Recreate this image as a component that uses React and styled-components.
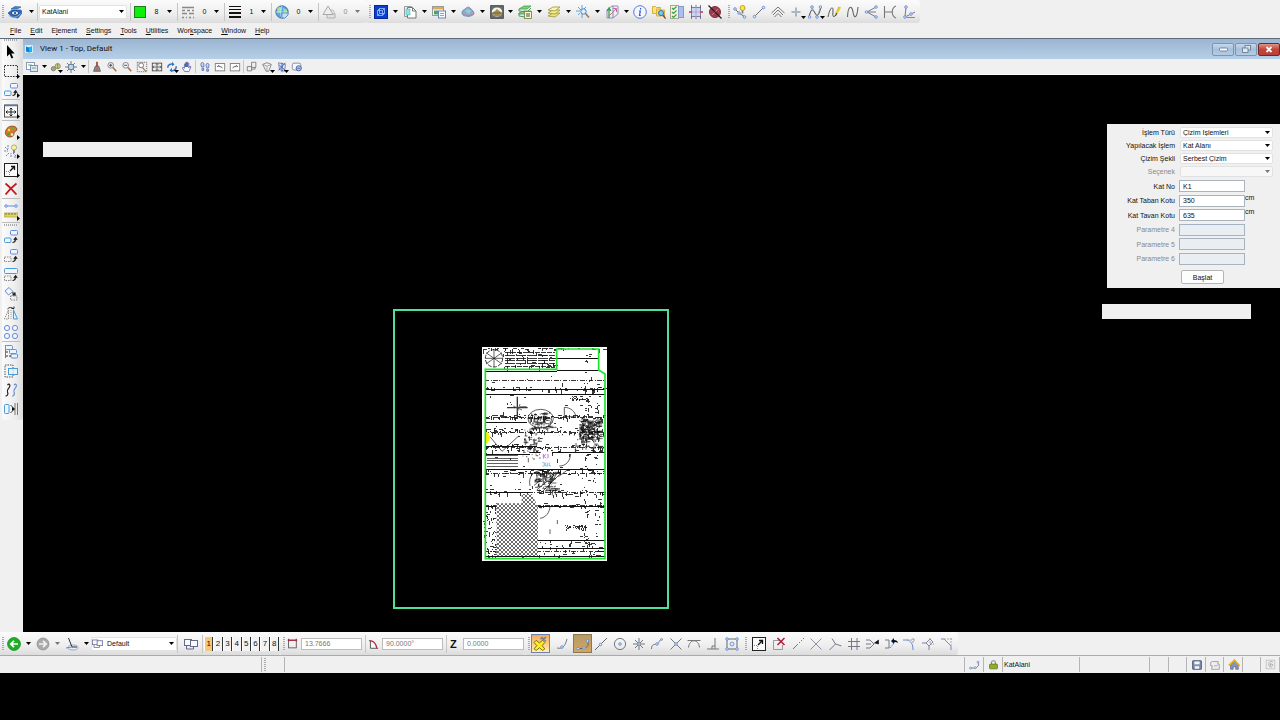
import React from "react";
import styled, { createGlobalStyle, css } from "styled-components";

/* ICONS */

const blue = "#6a8ad4";
const ink = "#6a6a6a";

const node = (x, y, r = 1.3) => (
  <circle key={`${x}-${y}`} cx={x} cy={y} r={r} fill="#dbe8ff" stroke={blue} strokeWidth="0.9" />
);

const dashedBox = (x, y, w, h, c = "#888") => (
  <rect x={x} y={y} width={w} height={h} stroke={c} strokeDasharray="1.5 1" />
);

const curvedArrow = (
  <path d="M8.5 12.5c3 0 3-2 3-4M9.8 9.8l1.8-2 1.6 2" stroke="#222" strokeWidth="1.2" />
);

const icons = {
  level: (
    <>
      <path d="M0 8l4-3h9l1 3-4 5-6-1z" fill="#2c6cbc" stroke="#1c4a8c" strokeWidth="0.6" />
      <ellipse cx="7" cy="8" rx="3.6" ry="2.2" fill="#eef5ff" stroke="#173d7a" />
      <circle cx="7" cy="8" r="1.2" fill="#2463b4" />
      <path d="M3 4l4-2.5 6 .5-4 2z" fill="#4b8cd6" stroke="#1d4f92" strokeWidth="0.6" />
      <path d="M0.5 10.5c4 3 9 2 12-2" stroke="#8db8ea" />
    </>
  ),
  lineStyle: (
    <path d="M1 2.5h12M1 5.5h3M6 5.5h3M11 5.5h2M1 8.5h5M8 8.5h5M1 12.5h2M5 12.5h1M8 12.5h2M12 12.5h1" stroke="#888" strokeWidth="1.4" />
  ),
  weight: (
    <>
      <path d="M1 1.5h12M1 4.5h12" stroke="#111" />
      <path d="M1 8h12M1 12h12" stroke="#111" strokeWidth="2" />
    </>
  ),
  globe: (
    <>
      <circle cx="7" cy="7" r="6.2" fill="#52a9e8" stroke="#3d5d86" strokeWidth="0.8" />
      <path d="M2 4c2-3 5-2 5 0S4 7 3 9zM8 3l4 2v3l-3 1z" fill="#a9dc9c" />
      <path d="M7 1c-2 4-2 8 0 12M1 7h12" stroke="#c7e6fb" strokeWidth="0.8" />
      <path d="M7 8h6v2l-3 3H7z" fill="#bfe2f8" stroke="#4778b8" strokeWidth="0.7" />
    </>
  ),
  transparency: (
    <>
      <path d="M5 9h8v4H5z" fill="#e2e2e2" stroke="#b0b0b0" />
      <path d="M6 1l5 8.5H1z" stroke="#a8a8a8" fill="#eee" />
      <path d="M9 5h2l2 4" stroke="#b8b8b8" />
    </>
  ),
  cube: (
    <>
      <rect x="0.5" y="0.5" width="13" height="13" fill="#0a3fd0" stroke="#08289a" />
      <path d="M3.5 5.5h5v5h-5zM5.5 3.5h5v5h-5zM3.5 5.5l2-2M8.5 5.5l2-2M8.5 10.5l2-2M3.5 10.5l2-2" stroke="#9fc4ff" strokeWidth="0.8" />
    </>
  ),
  page: (
    <>
      <path d="M1.5 1.5h7v10h-7z" fill="#eee" stroke="#999" />
      <path d="M4.5 2.5h5l3.5 3.5v7H4.5z" fill="#fff" stroke="#777" />
      <path d="M9.5 2.5V6H13" stroke="#777" />
      <path d="M3 4h4v6H3z" fill="#8fe3e0" stroke="#4aa" strokeWidth="0.5" />
    </>
  ),
  reference: (
    <>
      <rect x="0.5" y="1.5" width="11" height="9" fill="#fff" stroke="#999" />
      <rect x="1" y="2" width="10" height="2.5" fill="#e5a85a" />
      <rect x="2" y="5.5" width="4" height="4" fill="#45a86a" />
      <rect x="6.5" y="6" width="7" height="7" fill="#f7fbff" stroke="#6a88b5" />
      <path d="M8 8.5h4M8 10.5h4" stroke="#54c3d8" />
    </>
  ),
  cloud: (
    <>
      <path d="M1 8c0-3 2-3 3-4s3-3 5-1 4 3 4 6c-2 2-5 3-8 2-2 0-4-1-4-3z" fill="#93a9cc" stroke="#6a7ea2" strokeWidth="0.8" />
      <path d="M4 6l3-2 3 2-2 3z" fill="#8bd3cf" />
      <path d="M2 9.5c3 1.5 8 1.5 11-1" stroke="#c87f9f" />
    </>
  ),
  raster: (
    <>
      <rect x="0.7" y="0.7" width="12.6" height="12.6" fill="#68716f" stroke="#444" />
      <ellipse cx="7" cy="7" rx="5.2" ry="4.6" fill="#f3f7ef" />
      <path d="M2 8l3-2 2-2 5 4-2 3H4z" fill="#a98a4a" />
      <path d="M2 8h10" stroke="#5f7048" />
    </>
  ),
  modelList: (
    <>
      <path d="M1 4l5-3h7l-4 3zM1 8l5-2h7l-4 3H1z" fill="#7bd56f" stroke="#4a9b55" strokeWidth="0.8" />
      <path d="M1 4v2l8 1 4-4M1 8v3l6 1" stroke="#4a9b55" />
      <rect x="6.5" y="6.5" width="7" height="7" fill="#fff8c4" stroke="#707a3a" strokeWidth="0.8" />
      <path d="M8 9h4M8 11h4" stroke="#357" />
    </>
  ),
  layers: (
    <>
      <path d="M1 11l5-3h7l-5 4z" fill="#eee36c" stroke="#99943b" strokeWidth="0.8" />
      <path d="M1 8l5-3h7l-5 4z" fill="#f5ee93" stroke="#99943b" strokeWidth="0.8" />
      <path d="M1 5l5-3h7L8 6z" fill="#fbf6ae" stroke="#99943b" strokeWidth="0.8" />
    </>
  ),
  sparkleZoom: (
    <>
      <path d="M6 0v4M0 6h4M2 2l3 3M10 2L8 4M2 10l2-2M6 9v4" stroke="#5ba5dc" />
      <circle cx="7.5" cy="6.5" r="2.7" fill="#d9f1ff" stroke="#4883c2" />
      <path d="M9.5 8.5l3.5 4" stroke="#b2744e" strokeWidth="1.7" />
    </>
  ),
  acs: (
    <>
      <path d="M2 5l5-4h6v8l-5 4H2z" stroke="#9a8ac0" />
      <path d="M4 13V4M2 6l2-3 2 3" stroke="#3d9a4c" strokeWidth="1.3" />
      <path d="M4 11l7-7M8 3.5h3.5V7" stroke="#c76d8e" />
      <path d="M8 1v12" stroke="#7c8cc2" />
    </>
  ),
  info: (
    <>
      <circle cx="7" cy="7" r="6.3" fill="#f3f7ff" stroke="#5a78dc" />
      <path d="M7.6 3v1.4M6 6h1.3l-.8 4.5h1.3" stroke="#3558cf" strokeWidth="1.2" />
    </>
  ),
  folders: (
    <>
      <path d="M0.5 1.5h3l1 1h4v6h-8z" fill="#ffe479" stroke="#d4b040" />
      <path d="M4.5 4h3l1 1h4v6h-8z" fill="#ffd84d" stroke="#d4b040" />
      <circle cx="9" cy="8" r="2.5" fill="#73cdf0" stroke="#2f6eb0" />
      <path d="M11 10l2.5 3.5" stroke="#8d4f2e" strokeWidth="1.5" />
    </>
  ),
  checks: (
    <>
      <rect x="0.5" y="0.5" width="8" height="13" fill="#f3f4d8" stroke="#a9a98b" />
      <rect x="8.5" y="1.5" width="5" height="11" fill="#a9bfec" stroke="#8798c8" />
      <path d="M2 3l1.5 1.5 3-3M2 7l1.5 1.5 3-3M2 11l1.5 1.5 3-3" stroke="#3ca04a" strokeWidth="1.2" />
    </>
  ),
  gridLock: (
    <>
      <rect x="2.5" y="2.5" width="9" height="9" fill="#cfd3ef" stroke="#7c7ca0" />
      <path d="M7 2v10M2 7h10" stroke="#a5abd6" />
      <path d="M0 7h3M11 7h3" stroke="#c0344e" strokeWidth="1.3" />
      <path d="M7 0v2M7 12v2M2.5 0v3M2.5 11v3M11.5 0v3M11.5 11v3" stroke="#66668a" strokeWidth="0.9" />
    </>
  ),
  noMark: (
    <>
      <circle cx="7" cy="7" r="5.5" fill="#a63a4d" stroke="#7e2e3e" />
      <path d="M4 4l6 6M10 4l-6 6" stroke="#d08090" />
      <path d="M0.5 0.5l13 13" stroke="#222" strokeWidth="1.2" />
    </>
  ),
  smartLine: (
    <>
      <path d="M2 4l4 4 6 4" stroke={ink} />
      {node(2, 4)}
      {node(6, 8)}
      {node(11.5, 12)}
      <circle cx="9.5" cy="3" r="2.5" fill="#ffe83c" stroke="#a99314" strokeWidth="0.8" />
      <path d="M9.5 5.5v3" stroke="#777" strokeWidth="1.6" />
    </>
  ),
  line: (
    <>
      <path d="M2.5 11.5l9-9" stroke={ink} />
      {node(2.5, 11.5)}
      {node(11.5, 2.5)}
    </>
  ),
  multiLine: <path d="M0.5 8L7 2l6.500 6M2 10l5-5 5 5M3.500 12L7 8.500l3.500 3.500" stroke="#666" strokeWidth="0.9" />,
  point: (
    <>
      <path d="M7 2.500v9M2.500 7h9" stroke="#778" />
      <circle cx="7" cy="7" r="1.2" fill="#9cb8ee" />
    </>
  ),
  bspline: (
    <>
      <path d="M1 12L4 2l5 10 3.5-10" stroke="#9aa3c8" strokeWidth="0.8" />
      <path d="M1 12C3 3 5 4 7 8s4 3 6-6" stroke="#555" />
      {node(1.5, 12)}
      {node(4, 2)}
      {node(9, 12)}
      {node(12.5, 2)}
    </>
  ),
  freehand: (
    <>
      <path d="M1 12C3 2 6 1 6 5s-1 8 2 6 2-6 4-9" stroke="#555" />
      <path d="M9 9l4-7" stroke="#e7cb2e" strokeWidth="2.4" />
      <path d="M8.5 11l1-3" stroke="#444" />
    </>
  ),
  curve: <path d="M1.500 12C2 0 6 0 7 7s4 7 5-5" stroke="#666" strokeWidth="1.1" />,
  bisector: (
    <>
      <path d="M12 2L3 7l9 5M3 7h9" stroke="#778" />
      {node(12, 2)}
      {node(2.5, 7)}
      {node(12, 12)}
    </>
  ),
  minDistance: <path d="M1.500 1v12M2 7h7M13 1c-5 2-5 10 0 12" stroke="#777" strokeWidth="1.1" />,
  angleLine: (
    <>
      <path d="M4 2L3 12l10-5" stroke="#778" />
      {node(4, 2)}
      {node(3, 12)}
      {node(9, 9)}
      <path d="M5 12.5h8" stroke={blue} />
    </>
  ),
  viewAttr: (
    <>
      <rect x="1.5" y="2.5" width="8" height="7" fill="#fff" stroke="#8d9ab5" />
      <rect x="5.5" y="5.5" width="7" height="6" fill="#dce9f8" stroke="#7490c0" />
      <path d="M7 8h4M3 5h4" stroke="#68aa75" />
    </>
  ),
  display: (
    <>
      <circle cx="4" cy="9" r="2.5" fill="#a8a879" stroke="#777" />
      <circle cx="9" cy="6" r="3" fill="#d4d18d" stroke="#87845a" />
      <path d="M9 3v6" stroke="#4f8750" />
    </>
  ),
  sun: (
    <>
      <path d="M7 1v12M1 7h12M3 3l8 8M11 3l-8 8" stroke="#778" />
      <circle cx="7" cy="7" r="2.8" fill="#b7dbf0" stroke="#5d7c97" />
    </>
  ),
  brush: (
    <>
      <path d="M7 1v6" stroke="#a3422f" strokeWidth="2" />
      <path d="M5 6h4l2 6H3z" fill="#8c93a4" stroke="#444" strokeWidth="0.8" />
      <path d="M6 8v4M8 8v4" stroke="#c55a44" />
    </>
  ),
  zoomIn: (
    <>
      <circle cx="5.5" cy="5" r="3.3" fill="#f3f8ff" stroke="#778" />
      <path d="M5.5 3.2v3.600M3.7 5h3.600" stroke="#333" />
      <path d="M8 7.5l4 4.5" stroke="#a96b45" strokeWidth="1.7" />
    </>
  ),
  zoomOut: (
    <>
      <circle cx="5.5" cy="5" r="3.3" fill="#f3f8ff" stroke="#778" />
      <path d="M3.7 5h3.6" stroke="#333" />
      <path d="M8 7.5l4 4.5" stroke="#a96b45" strokeWidth="1.7" />
    </>
  ),
  windowArea: (
    <>
      {dashedBox(1.5, 1.5, 11, 11, "#666")}
      <circle cx="6" cy="5" r="2.8" fill="#fff" stroke="#667" />
      <path d="M7.5 7.5l4 5" stroke="#a98445" strokeWidth="1.5" />
    </>
  ),
  fit: (
    <>
      <rect x="1.5" y="2.5" width="11" height="9" stroke="#444" />
      <path d="M7 3v8M2 7h10M5.5 4.5L7 3l1.5 1.5M5.5 9.5L7 11l1.5-1.5M3.5 5.5L2 7l1.5 1.5M10.5 5.5L12 7l-1.5 1.5" stroke="#444" strokeWidth="0.9" />
    </>
  ),
  rotate: (
    <>
      <path d="M2 8c0-4 4-5 6-4M12 6c0 4-3 6-6 5" stroke="#3477c5" strokeWidth="1.8" />
      <path d="M7 1l3 3-3 2zM7 13l-3-2 3-3z" fill="#3477c5" />
    </>
  ),
  hand: (
    <path d="M4 12L1.500 8l1-.7L4 8.500V3.500h1.200V7V2h1.300v5V1.500h1.300V7V2.500h1.300V8l1.400-2 1 .7-1.500 4-1 1.800z" fill="#fff" stroke="#4a59a8" strokeWidth="0.9" />
  ),
  walk: (
    <path d="M3 2c3-1 3 2 2.500 5H3C2 5 2 3 3 2zM3.500 8.500h2V11h-2zM9 3c3-1 3 2 2 5H9C8 6 8 4 9 3zM9 9.500h2V12H9z" fill="#c3d5f4" stroke="#4762ae" strokeWidth="0.9" />
  ),
  viewPrev: (
    <>
      <rect x="1.5" y="3" width="11" height="8.5" fill="#fff" stroke="#777" />
      <path d="M3.500 7l2-2v1.500c2 0 4 0 4 2" stroke="#555" />
    </>
  ),
  viewNext: (
    <>
      <rect x="1.5" y="3" width="11" height="8.5" fill="#fff" stroke="#777" />
      <path d="M10.500 7l-2-2v1.500c-2 0-4 0-4 2" stroke="#555" />
    </>
  ),
  copyView: (
    <path d="M6.500 1.500h5v6h-5zM1.500 6.500h5v5h-5zM6.500 9.500h4v-2" stroke="#777" />
  ),
  clip: (
    <>
      <path d="M2 4l5-2 5 2-3 8H6z" fill="#f4f4f4" stroke="#777" />
      <path d="M2 4l5 2 5-2M7 6v6" stroke="#999" />
    </>
  ),
  clipMask: (
    <>
      <path d="M3 2l8 2-1 8-6-2z" fill="#e2edff" stroke="#6c7ab0" />
      <path d="M3 11l8-9M7 2v11M4 5l7 6" stroke="#33519c" />
    </>
  ),
  clipOff: (
    <>
      <rect x="1.5" y="2.5" width="10" height="8" rx="2" fill="#f6f8ff" stroke="#767fa6" />
      <circle cx="9" cy="8.5" r="3" fill="#b9cdf5" stroke="#334f9a" />
      <path d="M7.5 8.5h3" stroke="#334f9a" />
    </>
  ),
  pointer: <path d="M3 0v11.500l2.600-2.500 1.900 4.500 1.800-.8-2-4.200h3.400z" fill="#000" />,
  fence: <rect x="0.5" y="1.5" width="13" height="11" stroke="#222" strokeDasharray="1.5 1.2" />,
  copy: (
    <>
      <rect x="6.5" y="0.5" width="7" height="4.5" rx="1" fill="#eef6ff" stroke={blue} />
      <rect x="0.5" y="8" width="6.5" height="4.5" rx="1" fill="#eef6ff" stroke="#4a9bd6" />
      {curvedArrow}
    </>
  ),
  move: (
    <>
      <rect x="6.5" y="0.5" width="7" height="4.5" rx="1" fill="#eef6ff" stroke={blue} />
      {dashedBox(0.5, 8, 6.5, 4.5)}
      {curvedArrow}
    </>
  ),
  scale: (
    <>
      <rect x="0.5" y="0.5" width="13" height="5" rx="1" fill="#eef6ff" stroke="#4a9bd6" />
      {dashedBox(0.5, 8, 6.5, 4.5)}
      {curvedArrow}
    </>
  ),
  turn: (
    <>
      <path d="M5 0.500l4 4L4.500 8 1 4z" fill="#eef6ff" stroke={blue} />
      {dashedBox(6.5, 9, 6.5, 4)}
      <path d="M8 6h3v3M8.500 8.500L11 6" stroke="#222" strokeWidth="1.2" />
    </>
  ),
  mirror: (
    <>
      <path d="M4.500 4v9h-4z" stroke="#888" strokeDasharray="1.5 1" />
      <path d="M9.500 4v9h4z" fill="#d8f0ff" stroke="#4a9bd6" />
      <path d="M3.500 3c2-2 4-2 6 0M7.500 2.500H10V0.500" stroke="#222" />
      <path d="M7 4v10" stroke="#999" strokeDasharray="1 1" />
    </>
  ),
  array: (
    <>
      {[3, 11].map((x) => [3, 11].map((y) => (
        <circle key={`${x}${y}`} cx={x} cy={y} r="2.6" fill="#eef6ff" stroke={blue} />
      )))}
    </>
  ),
  align: (
    <>
      <path d="M1.500 0v13" stroke="#777" />
      <rect x="1.5" y="0.5" width="7" height="4" rx="1" fill="#eaf5ff" stroke={blue} />
      <rect x="5.5" y="4.5" width="7" height="4" rx="1" fill="#eaf5ff" stroke="#4a9bd6" />
      <rect x="7" y="9" width="6.500" height="4" rx="1" fill="#eaf5ff" stroke={blue} />
      <path d="M2 7h3M2 11h5" stroke="#333" strokeDasharray="2 1" />
    </>
  ),
  stretch: (
    <>
      {dashedBox(1, 1, 8, 12, "#555")}
      <rect x="4.5" y="4.5" width="9" height="6" fill="#e4f5ff" fillOpacity="0.7" stroke="#4a9bd6" />
    </>
  ),
  waves: (
    <>
      <path d="M3.500 2c2-2 3 0 2 2s-3 3-2 5 0 4-2 4" stroke="#222" strokeWidth="1.2" />
      <path d="M10 2c2-2 3 0 2 2s-3 3-2 5 0 4-2 4" stroke={blue} strokeWidth="1.2" />
    </>
  ),
  flip: (
    <>
      <rect x="0.5" y="2.5" width="4.5" height="9" rx="1" fill="#eaf5ff" stroke="#4a9bd6" />
      <path d="M13.500 1v12M11 1v12" stroke="#777" />
      <path d="M6.500 3l4 4-4 4" stroke="#444" />
      <path d="M8 5l3 2-3 2z" fill="#111" />
    </>
  ),
  viewWindow: (
    <>
      <rect x="0.5" y="1" width="13" height="12" fill="#fafafa" stroke="#555" />
      <path d="M0.500 1.500h13" stroke="#5673bb" strokeWidth="1.500" />
      <path d="M7 4v8M2 8h10M5.500 5.500L7 4l1.500 1.500M5.500 10.500L7 12l1.500-1.500M3.500 6.500L2 8l1.500 1.500M10.500 6.500L12 8l-1.500 1.500" stroke="#222" />
    </>
  ),
  palette: (
    <>
      <path d="M2 5c2-5 10-5 11-1 0 3-3 2-3 4s-1 4-4 4-6-3-4-7z" fill="#d8782c" stroke="#7d4419" strokeWidth="0.8" />
      <circle cx="5" cy="5" r="1.2" fill="#f5e52c" />
      <circle cx="9" cy="3.5" r="1.2" fill="#56b64a" />
      <circle cx="4.5" cy="9" r="1.500" fill="#4a9f3c" />
      <circle cx="8" cy="9.5" r="1.3" fill="#f4ead6" />
    </>
  ),
  group: (
    <>
      <path d="M1 3l3 3M4 1v4M0 7h4M2 12l3-3M7 13V9M12 12L9 9M10 13h3" stroke="#7484bc" strokeDasharray="2 0.8" />
      <circle cx="10" cy="3.5" r="2.6" fill="#f8f29a" stroke="#9f9d5c" strokeWidth="0.8" />
      <path d="M10 6v3" stroke="#777" strokeWidth="1.8" />
    </>
  ),
  modify: (
    <>
      <rect x="0.5" y="0.5" width="13" height="13" fill="#fafafa" stroke="#222" />
      <path d="M2 8.500h3.500V12" stroke="#888" strokeDasharray="1 1" />
      <path d="M6 8l4-4M7 3.500h3.500V7" stroke="#111" strokeWidth="1.3" />
    </>
  ),
  remove: <path d="M1.500 1.500c4 3 7 7 11 11M12.500 1.500C8 5 5 8 1.500 12.500" stroke="#c4161c" strokeWidth="1.7" />,
  measure: (
    <>
      <path d="M2 2h10" stroke={blue} />
      {node(2, 2)}
      {node(12, 2)}
      <rect x="0" y="9" width="14" height="4" fill="#dcd468" stroke="#a39a32" strokeWidth="0.6" />
      <path d="M2 9v2M5 9v2M8 9v2M11 9v2" stroke="#665f20" strokeWidth="0.8" />
    </>
  ),
  back: (
    <>
      <circle cx="7" cy="7" r="6.4" fill="#1fae27" stroke="#148a1b" strokeWidth="0.8" />
      <path d="M11 7H4M7 3.800L3.800 7 7 10.200" stroke="#fff" strokeWidth="1.7" />
    </>
  ),
  forward: (
    <>
      <circle cx="7" cy="7" r="6" fill="#a9a9a9" stroke="#909090" strokeWidth="0.8" />
      <path d="M3 7h7M7 3.800L10.200 7 7 10.200" stroke="#f2f2f2" strokeWidth="1.7" />
    </>
  ),
  compass: (
    <>
      <ellipse cx="8" cy="10.5" rx="5" ry="2.5" fill="#e5ecfa" stroke="#9aabd0" />
      <path d="M3.500 1L7 10h5" stroke="#333" />
      <path d="M1 11l6-1" stroke="#888" />
    </>
  ),
  windows: (
    <>
      <rect x="0.5" y="2.5" width="7" height="6" fill="#fafaff" stroke="#656b8d" />
      <rect x="6.5" y="3.5" width="7" height="6" fill="#fafaff" stroke="#656b8d" />
      <path d="M2.500 8.500V12h7V9.500" stroke="#656b8d" />
    </>
  ),
  distance: (
    <>
      <rect x="3" y="3" width="9" height="8.5" stroke="#555" />
      <path d="M2 2.500h11M3 1v3M12 1v3" stroke="#b02741" strokeWidth="1.3" />
    </>
  ),
  angle: (
    <>
      <path d="M4 3v9h9z" fill="#f8f8f8" />
      <path d="M4 3v9h9" stroke="#444" />
      <path d="M2.500 3c5 0 8 3 9 9" stroke="#b02741" strokeWidth="1.3" />
    </>
  ),
  accuSnap: (
    <>
      <path d="M1 6l2-2 3 2.500L9 4l2 2-2.500 3L11 12l-2 1.500L6 11l-3 2.500L1 12l2.500-3z" fill="#ffee22" stroke="#665b12" strokeWidth="0.8" />
      <path d="M9 4l3-3M12 5L9 2M7 3l2-2" stroke="#687a8c" strokeWidth="1.2" />
    </>
  ),
  nearest: (
    <>
      <path d="M2 11c5 1 8-1 10-9" stroke="#778" />
      {node(7, 10)}
    </>
  ),
  keypoint: (
    <>
      <path d="M2 11.500h7l3-3V3" stroke="#666" />
      {node(2, 11.5)}
      {node(8, 11)}
      {node(11.5, 4)}
    </>
  ),
  midpoint: (
    <>
      <path d="M1 13L13 1" stroke={ink} />
      {node(6.5, 7.5)}
    </>
  ),
  center: (
    <>
      <circle cx="7" cy="7" r="5.6" stroke="#777" />
      {node(7, 7)}
    </>
  ),
  origin: (
    <>
      <path d="M7 1v12M1 7h12M3 3l8 8M11 3l-8 8" stroke="#777" />
      {node(7, 7)}
    </>
  ),
  bisect: (
    <>
      <path d="M1.500 12c0-6 4-4 6-5s1-4 5-5" stroke="#778" />
      {node(7, 7)}
      {node(11.5, 2.5, 0.9)}
    </>
  ),
  intersect: (
    <>
      <path d="M1.500 1.500l11 11M12.500 1.500l-11 11" stroke="#777" />
      {node(7, 7)}
    </>
  ),
  tangent: <path d="M0.500 3.500h13M1.500 10.500c1-9 10-9 11 0" stroke="#777" />,
  perpendicular: <path d="M1 12h12M9 1v11M6 12V9h3" stroke="#777" />,
  through: (
    <>
      <rect x="2" y="2" width="10" height="10" stroke="#666" />
      {node(2, 2)}
      {node(12, 2)}
      {node(2, 12)}
      {node(12, 12)}
      {node(7, 7, 2)}
    </>
  ),
  partDelete: (
    <>
      <path d="M8 3.500H1.500v9h9V8" stroke="#999" />
      <path d="M5.500 1l7 7M12.500 1l-7 7" stroke="#b51635" strokeWidth="1.5" />
    </>
  ),
  extend: <path d="M2 12l5-5M8 6l1-1M10 4l1-1M12 2l1-1" stroke="#777" />,
  trimCross: <path d="M1.500 1.500l11 11M12.500 1.500l-11 11" stroke="#8b94a4" />,
  trimY: <path d="M4 1.500L7.500 7l-6 6M7.500 7l6 2" stroke="#778" />,
  hash: <path d="M4.500 1v12M10 1v12M1 4.500h12M1 9.500h12" stroke="#778" />,
  trimTo: (
    <>
      <path d="M1 3h4l4 4-4 4H1M1 7h5" stroke="#778" />
      <path d="M9.500 6l4-3v4z" fill="#111" stroke="#111" strokeWidth="0.6" />
    </>
  ),
  trimBack: (
    <>
      <path d="M1 3h4v8H1" stroke="#778" />
      <path d="M6 11l5-6" stroke={blue} strokeDasharray="2 1" />
      <path d="M7 4l3-3v2c2 0 4 1 4 3-1-1-2-1-4-1v2z" fill="#111" />
    </>
  ),
  fillet: (
    <>
      <path d="M1 3h4c4 1 6 4 6 10" stroke={blue} />
      <path d="M5 3h8M11 1v6" stroke="#999" strokeDasharray="2 1" />
    </>
  ),
  chamfer: (
    <>
      <path d="M1 6h4l3 3v4M5 6l4-4 3 3-4 4" stroke="#7d85a8" />
      <path d="M9 1v6h4" stroke="#999" strokeDasharray="2 1" />
    </>
  ),
  round: (
    <>
      <path d="M1 2h3l7 7v4" stroke={blue} />
      <path d="M4 2h9M11 1v8" stroke="#aaa" strokeDasharray="2 1" />
    </>
  ),
  lock: (
    <>
      <path d="M4.500 7V4.500c0-3 5-3 5 0V7" stroke="#888" strokeWidth="1.3" />
      <rect x="2" y="6.5" width="10" height="6" rx="1" fill="#93ad2a" stroke="#5e7414" />
    </>
  ),
  save: (
    <>
      <rect x="2" y="2" width="10" height="10" rx="1" fill="#8494b4" stroke="#4f5b76" strokeWidth="1.3" />
      <path d="M4 3h6v3H4zM4.500 8.500h5v3h-5z" fill="#f5f7fb" />
    </>
  ),
  workfile: <path d="M4 3h7l-1 3h2v6H3l1-4H2V4zM6 8h4" stroke="#999" />,
  home: (
    <>
      <path d="M3 7v5h3V9h3v3h3V7L7.500 3z" fill="#8196bd" stroke="#4c5b7c" strokeWidth="0.7" />
      <path d="M1 7.500l6.500-6 6 6.500" stroke="#f0aa10" strokeWidth="2" />
    </>
  ),
  trusted: (
    <>
      <rect x="1.5" y="1.5" width="11" height="11" stroke="#bbb" />
      <path d="M10 4c-3-2-6 0-5 4s5 2 5-1l-3-1v3" stroke="#999" />
    </>
  ),
};

const Icon = ({ name, size = 14 }) => (
  <svg width={size} height={size} viewBox="0 0 14 14" fill="none" aria-hidden="true">
    {icons[name]}
  </svg>
);

const Caret = ({ dim }) => (
  <svg width="5" height="3" viewBox="0 0 5 3" aria-hidden="true">
    <path d="M0 0h5L2.500 3z" fill={dim ? "#777" : "#000"} />
  </svg>
);

/* DATA */

const menus = [
  ["", "F", "ile"],
  ["", "E", "dit"],
  ["E", "l", "ement"],
  ["", "S", "ettings"],
  ["", "T", "ools"],
  ["", "U", "tilities"],
  ["Wor", "k", "space"],
  ["", "W", "indow"],
  ["", "H", "elp"],
];

const attributes = [
  { icon: "swatch", value: "8" },
  { icon: "lineStyle", value: "0" },
  { icon: "weight", value: "1" },
  { icon: "globe", value: "0" },
  { icon: "transparency", value: "0", dim: true },
];

const primary = ["cube", "page", "reference", "cloud", "raster", "modelList", "layers", "sparkleZoom", "acs"];
const inspect = ["info", "folders", "checks", "gridLock", "noMark"];
const linear = ["smartLine", "line", "multiLine", "point", "bspline", "freehand", "curve", "bisector", "minDistance", "angleLine"];
const zoomTools = ["brush", "zoomIn", "zoomOut", "windowArea", "fit", "rotate", "hand"];
const clipTools = ["copyView", "clip", "clipMask", "clipOff"];
const snaps = ["midpoint", "center", "origin", "bisect", "intersect", "tangent", "perpendicular", "through"];
const modifyTools = ["partDelete", "extend", "trimCross", "trimY", "hash", "trimTo", "trimBack", "fillet", "chamfer", "round"];
const withMore = ["point", "bspline", "display", "rotate", "clip", "clipMask"];

const choices = [
  { id: "tur", label: "İşlem Türü", value: "Çizim İşlemleri" },
  { id: "islem", label: "Yapılacak İşlem", value: "Kat Alanı" },
  { id: "sekil", label: "Çizim Şekli", value: "Serbest Çizim" },
  { id: "secenek", label: "Seçenek", value: "", disabled: true },
];

const fields = [
  { id: "kat", label: "Kat No", value: "K1" },
  { id: "taban", label: "Kat Taban Kotu", value: "350", unit: "cm" },
  { id: "tavan", label: "Kat Tavan Kotu", value: "635", unit: "cm" },
  { id: "p4", label: "Parametre 4", value: "", disabled: true },
  { id: "p5", label: "Parametre 5", value: "", disabled: true },
  { id: "p6", label: "Parametre 6", value: "", disabled: true },
];

/* FLOOR PLAN */

const makeRandom = (seed) => () => {
  seed = (seed * 16807) % 2147483647;
  return seed / 2147483647;
};

// small broken strokes spread over a box
const scribble = (seed, x, y, w, h, count, len) => {
  const rnd = makeRandom(seed);
  let d = "";
  for (let i = 0; i < count; i++) {
    const px = Math.round(x + rnd() * w);
    const py = Math.round(y + rnd() * h);
    const l = Math.round(2 + rnd() * len);
    d += rnd() > 0.45 ? `M${px} ${py}h${l}` : `M${px} ${py}v${l}`;
  }
  return d;
};

const solidLines = [
  [44, 93, 260], [262, 56, 388], [44, 148, 405], [44, 162, 405], [262, 92, 388],
  [48, 248, 170], [48, 320, 200], [48, 342, 180], [180, 338, 405], [44, 388, 405],
  [48, 458, 180], [44, 500, 405], [200, 600, 405], [200, 626, 405], [44, 650, 405],
];
const dashedLines = [122, 232, 276, 322, 400, 456, 496, 634];
const stairs = [346, 354, 362, 370, 378];

const FloorPlan = () => (
  <PlanSvg viewBox="36 21 375 642" fill="none" stroke="#111" strokeWidth="2.5">
    <defs>
      <pattern id="weave" width="12" height="12" patternUnits="userSpaceOnUse">
        <path d="M0 0l12 12M12 0L0 12" stroke="#222" strokeWidth="2" />
      </pattern>
    </defs>
    <rect x="36" y="21" width="375" height="642" fill="#fff" stroke="none" />
    <g shapeRendering="crispEdges">
      {solidLines.map(([x, y, end]) => (
        <path key={`${x}-${y}`} d={`M${x} ${y}H${end}`} strokeWidth="3" />
      ))}
      {dashedLines.map((y) => (
        <path key={y} d={`M44 ${y}H405`} strokeDasharray="14 4 3 5" />
      ))}
      {[36, 46, 54, 62, 70, 80].map((y) => (
        <path key={y} d={`M105 ${y}H255`} strokeDasharray={y % 4 ? "30 3" : "14 4"} />
      ))}
      {stairs.map((y) => (
        <path key={y} d={`M52 ${y}H145`} strokeWidth="2" />
      ))}
      <path d={scribble(71, 46, 140, 355, 12, 42, 12)} />
      <path d={scribble(37, 46, 224, 355, 12, 75, 12)} />
      <path d={scribble(17, 46, 264, 355, 16, 60, 10)} />
      <path d={scribble(57, 46, 312, 355, 30, 75, 10)} />
      <path d={scribble(91, 46, 386, 355, 18, 75, 10)} />
      <path d={scribble(23, 46, 448, 355, 16, 50, 12)} />
      <path d={scribble(64, 46, 490, 355, 14, 38, 12)} />
      <path d={scribble(77, 46, 600, 355, 52, 90, 10)} />
      <path d={scribble(12, 46, 100, 355, 540, 110, 9)} />
      <path d={scribble(41, 342, 36, 16, 590, 60, 9)} />
      <path d={scribble(99, 365, 100, 20, 540, 40, 10)} />
      <path d={scribble(31, 286, 554, 62, 12, 35, 5)} />
      <path d={scribble(49, 300, 168, 58, 14, 30, 6)} />
      <path d={scribble(29, 40, 24, 365, 4, 40, 14)} />
      <path d={scribble(63, 40, 500, 38, 150, 55, 8)} />
      <path d={scribble(55, 100, 28, 155, 55, 50, 14)} />
    </g>
    <circle cx="72" cy="55" r="26" strokeDasharray="12 4" />
    <path d="M48 38l48 34M96 38L48 72M72 29v52M46 55h52" strokeWidth="2" />
    <path d="M80 490h75v-28h30l19 38v148H80z" fill="#fff" stroke="none" />
    <path d="M80 490h75v-28h30l19 38v148H80z" fill="url(#weave)" stroke="none" />
    <g strokeWidth="2">
      <path d={scribble(83, 180, 218, 64, 52, 75, 14)} />
      <path d={scribble(45, 158, 270, 50, 85, 70, 12)} />
      <path d={scribble(19, 195, 396, 62, 58, 100, 14)} />
      <path d={scribble(26, 328, 236, 62, 62, 190, 14)} />
      <path d={scribble(38, 316, 296, 70, 30, 35, 14)} />
      <path d="M328 240l62 64M340 236l52 54M330 262l42 44M392 236l-60 64M376 234l-46 50M200 450l60-50M192 436l50-38M210 462l60-60" />
      <ellipse cx="212" cy="236" rx="38" ry="28" />
      <path d="M283 202v28h34c0-15-16-28-34-28zM268 378c20 0 32-14 34-36M180 438c-6-30 10-44 36-48M230 448l35-54M60 290l36 44 50-46M265 410l30-22" />
    </g>
    <path d="M218 286h96v27h-74l-22-10zM206 505h60v85h-60z" fill="#fff" stroke="none" />
    <path d="M210 535c18-2 29-18 30-36M240 568v14M262 540v12" strokeWidth="2" />
    <rect x="212" y="334" width="34" height="50" fill="#fff" stroke="none" />
    <path d="M220 342v14M220 349l8-6M222 349l7 6M234 342v13" stroke="#b060c8" />
    <path d="M217 368h6v10h-6M227 368v10h6v-10M238 368v10h5" stroke="#62bde0" />
    <path d="M46 276h8l6 20-8 14h-6z" fill="#ffef00" stroke="none" />
    <path d="M111 203h62M142 170v64" stroke="#333" strokeWidth="4" />
    <path d="M130 198l26 12M150 192l-8 24M150 200h20" stroke="#555" />
    <path d="M46 656V88h214V27h126v63l19 12v554z" stroke="#1fe02c" strokeWidth="5" />
  </PlanSvg>
);

/* PARTS */

const Tool = ({ name, size, side }) => (
  <ToolButton type="button" aria-label={name}>
    <Icon name={name} size={size} />
    {(side || withMore.includes(name)) && (
      <More $side={side}>
        <Caret />
      </More>
    )}
  </ToolButton>
);

const DropTool = ({ name, dim }) => (
  <DropButton type="button" aria-label={name}>
    <Icon name={name} />
    <Caret dim={dim} />
  </DropButton>
);

const Combo = ({ id, label, value, disabled, icon, grow, width }) => (
  <ComboWrap $grow={grow} $width={width}>
    {icon && (
      <ComboIcon>
        <Icon name={icon} size={11} />
      </ComboIcon>
    )}
    <Select id={id} aria-label={label} disabled={disabled} $indent={icon ? 15 : 2}>
      <option>{value}</option>
    </Select>
    <ComboCaret>
      <Caret dim={disabled} />
    </ComboCaret>
  </ComboWrap>
);

const App = () => {
  return (
    <>
      <GlobalStyle />
      <Window>
        <TopBar>
          <Group>
            <Grip />
            <Strip $w={32}>
              <DropTool name="level" />
            </Strip>
            <Divider />
            <Combo label="Level" value="KatAlani" width={88} />
            <Gap $w={3} />
            {attributes.map((a) => (
              <Attribute key={a.icon} type="button" $dim={a.dim}>
                {a.icon === "swatch" ? <Swatch /> : <Icon name={a.icon} />}
                <span>{a.value}</span>
                <Caret dim={a.dim} />
              </Attribute>
            ))}
          </Group>
          <Group>
            <Grip />
            <Strip $w={259}>
              {primary.map((n) => (
                <DropTool key={n} name={n} />
              ))}
            </Strip>
            <Strip $w={93}>
              {inspect.map((n) => (
                <Tool key={n} name={n} />
              ))}
            </Strip>
          </Group>
          <Group>
            <Grip />
            <Strip $w={187}>
              {linear.map((n) => (
                <Tool key={n} name={n} />
              ))}
            </Strip>
          </Group>
        </TopBar>
        <MenuBar>
          {menus.map(([pre, key, post]) => (
            <MenuItem key={pre + key + post} type="button">
              {pre}
              <u>{key}</u>
              {post}
            </MenuItem>
          ))}
        </MenuBar>

        <Body>
          <Dock>
            <DockTools>
              <DockGrip />
              <Column $h={57}>
                <Tool name="pointer" />
                <Tool name="fence" side />
                <Tool name="copy" side />
              </Column>
              <Rule />
              <Column $h={19}>
                <Tool name="viewWindow" side />
              </Column>
              <Rule />
              <Column $h={76}>
                <Tool name="palette" side />
                <Tool name="group" side />
                <Tool name="modify" side />
                <Tool name="remove" />
              </Column>
              <Rule />
              <Column $h={22}>
                <Tool name="measure" side />
              </Column>
              <Rule />
              <DockGrip />
              <Column $h={114}>
                {["copy", "move", "scale", "turn", "mirror", "array"].map((n) => (
                  <Tool key={n} name={n} />
                ))}
              </Column>
              <Rule />
              <Column $h={75}>
                {["align", "stretch", "waves", "flip"].map((n) => (
                  <Tool key={n} name={n} />
                ))}
              </Column>
            </DockTools>
          </Dock>

          <View>
            <TitleBar>
              <svg width="8" height="8" viewBox="0 0 8 8" aria-hidden="true">
                <rect width="8" height="8" rx="1" fill="#c9f0ff" />
                <path d="M1 1.500l3 1 3-1v5l-3 1-3-1z" fill="#0c7fd8" />
                <path d="M4 2.500v5l3-1v-5z" fill="#18b4ee" />
              </svg>
              <Title>View 1 - Top, Default</Title>
              <WindowButton type="button" aria-label="Minimize">
                <svg width="9" height="5" viewBox="0 0 9 5">
                  <rect x="0.5" y="1" width="8" height="3" rx="1" fill="#fff" stroke="#75859a" />
                </svg>
              </WindowButton>
              <WindowButton type="button" aria-label="Restore">
                <svg width="9" height="8" viewBox="0 0 9 8" fill="#dfe9f3" stroke="#75859a">
                  <rect x="3" y="0.5" width="5.5" height="4.5" />
                  <rect x="0.5" y="3" width="5.5" height="4.5" />
                </svg>
              </WindowButton>
              <WindowButton type="button" aria-label="Close" $close>
                <svg width="8" height="7" viewBox="0 0 8 7">
                  <path d="M1.500 1l5 5M6.500 1l-5 5" stroke="#fff" strokeWidth="1.8" />
                </svg>
              </WindowButton>
            </TitleBar>
            <ViewTools>
              <Strip $w={25}>
                <DropTool name="viewAttr" />
              </Strip>
              <Strip $w={15}>
                <Tool name="display" size={12} />
              </Strip>
              <Strip $w={24}>
                <DropTool name="sun" />
              </Strip>
              <Divider />
              <Strip $w={104}>
                {zoomTools.map((n) => (
                  <Tool key={n} name={n} size={12} />
                ))}
              </Strip>
              <Divider />
              <Strip $w={45}>
                {["walk", "viewPrev", "viewNext"].map((n) => (
                  <Tool key={n} name={n} size={12} />
                ))}
              </Strip>
              <Divider />
              <Strip $w={59}>
                {clipTools.map((n) => (
                  <Tool key={n} name={n} size={12} />
                ))}
              </Strip>
            </ViewTools>
            <Canvas>
              <EmptyBar $left={20} $top={67} />
              <Sheet />
              <FloorPlan />
              <Panel>
                {choices.map((c) => (
                  <ChoiceRow key={c.id}>
                    <Label htmlFor={c.id} $dim={c.disabled}>{c.label}</Label>
                    <Combo id={c.id} value={c.value} disabled={c.disabled} grow />
                  </ChoiceRow>
                ))}
                <Fields>
                  {fields.map((f) => (
                    <FieldRow key={f.id}>
                      <Label htmlFor={f.id} $dim={f.disabled}>{f.label}</Label>
                      <Field id={f.id} defaultValue={f.value} disabled={f.disabled} />
                      <Unit>{f.unit}</Unit>
                    </FieldRow>
                  ))}
                </Fields>
                <StartButton type="button">Başlat</StartButton>
              </Panel>
              <EmptyBar $left={1079} $top={229} />
            </Canvas>
          </View>
        </Body>

        <BottomBar>
          <Group>
            <Grip />
            <Strip $w={86}>
              <DropTool name="back" />
              <DropTool name="forward" dim />
              <DropTool name="compass" />
            </Strip>
            <Combo label="View group" value="Default" icon="windows" width={86} />
            <Divider />
            <Strip $w={23}>
              <Tool name="windows" />
            </Strip>
            <Divider />
            <ViewNumbers>
              {[1, 2, 3, 4, 5, 6, 7, 8].map((n) => (
                <ViewNumber key={n} type="button" $on={n === 1}>{n}</ViewNumber>
              ))}
            </ViewNumbers>
          </Group>
          <Group>
            <Grip />
            <Coordinate>
              <Icon name="distance" size={12} />
              <CoordInput aria-label="Distance" defaultValue="13.7666" />
            </Coordinate>
            <Divider />
            <Coordinate>
              <Icon name="angle" size={12} />
              <CoordInput aria-label="Angle" defaultValue="90.0000°" />
            </Coordinate>
            <Divider />
            <Coordinate>
              <Axis htmlFor="z">Z</Axis>
              <CoordInput id="z" defaultValue="0.0000" />
            </Coordinate>
          </Group>
          <Group>
            <Grip />
            <Pressed type="button" aria-label="Snap">
              <Icon name="accuSnap" size={15} />
            </Pressed>
            <Strip $w={23}>
              <Tool name="nearest" />
            </Strip>
            <Pressed type="button" aria-label="Keypoint" $dark>
              <Icon name="keypoint" />
            </Pressed>
            <Strip $w={149}>
              {snaps.map((n) => (
                <Tool key={n} name={n} />
              ))}
            </Strip>
          </Group>
          <Group>
            <Grip />
            <Strip $w={22}>
              <Tool name="modify" />
            </Strip>
            <Strip $w={186}>
              {modifyTools.map((n) => (
                <Tool key={n} name={n} />
              ))}
            </Strip>
          </Group>
        </BottomBar>
        <StatusBar>
          <Cell $w={262} />
          <Grip />
          <Cell $w={18} />
          <Cell $grow />
          <Cell $w={19}><Icon name="keypoint" size={11} /></Cell>
          <Cell $w={19}><Icon name="lock" size={11} /></Cell>
          <Cell $w={77} $text>KatAlani</Cell>
          <Cell $w={70} />
          <Cell $w={19} />
          <Cell $w={18} />
          <Cell $w={19}><Icon name="save" size={12} /></Cell>
          <Cell $w={18}><Icon name="workfile" size={12} /></Cell>
          <Cell $w={19}><Icon name="home" size={12} /></Cell>
          <Cell $w={18} />
          <Cell $w={19}><Icon name="trusted" size={11} /></Cell>
        </StatusBar>
      </Window>
    </>
  );
};

export default App;

/* STYLES */

const GlobalStyle = createGlobalStyle`
  * {
    box-sizing: border-box;
  }

  body {
    margin: 0;
    background: #000;
    font-family: "Liberation Sans", Arial, sans-serif;
    font-size: 7px;
    color: #111;
  }

  button, input, select {
    font: inherit;
    color: inherit;
    padding: 0;
    margin: 0;
  }

  svg {
    display: block;
    flex-shrink: 0;
  }
`;

const Window = styled.div`
  display: flex;
  flex-direction: column;
  min-height: 100vh;
  padding-bottom: 47px;
`;

const TopBar = styled.div`
  display: flex;
  height: 23px;
  background: #f0f0f0;
`;

const Group = styled.div`
  display: flex;
  align-items: center;
  padding-right: 2px;
  border-radius: 0 3px 3px 0;
  background: linear-gradient(#fbfbfb, #eeeeee 60%, #dcdcdc);
`;

const Grip = styled.span`
  width: 2px;
  height: 13px;
  margin: 0 1px 0 2px;
  flex-shrink: 0;
  background: repeating-linear-gradient(#aaa 0 1px, transparent 1px 2px);
`;

const Divider = styled.span`
  width: 1px;
  height: 18px;
  margin: 0 1px 0 0;
  background: #c6c6c6;
`;

const Gap = styled.span`
  width: ${(p) => p.$w}px;
`;

const Strip = styled.div`
  display: flex;
  width: ${(p) => p.$w}px;

  > * {
    flex: 1 1 0;
    min-width: 0;
  }
`;

const Column = styled.div`
  display: flex;
  flex-direction: column;
  height: ${(p) => p.$h}px;

  > * {
    flex: 1 1 0;
    min-height: 0;
  }
`;

const ToolButton = styled.button`
  position: relative;
  display: flex;
  align-items: center;
  justify-content: center;
  border: 0;
  background: none;
`;

const DropButton = styled(ToolButton)`
  justify-content: space-around;
`;

const More = styled.span`
  position: absolute;
  right: 0;
  bottom: 0;

  ${(p) => p.$side && css`
    right: -1px;
    bottom: 2px;
    transform: rotate(-90deg);
  `}
`;

const Attribute = styled.button`
  display: flex;
  align-items: center;
  justify-content: space-between;
  width: 47px;
  height: 18px;
  padding: 0 5px 0 3px;
  border: 0;
  border-left: 1px solid #c6c6c6;
  background: none;
  color: ${(p) => (p.$dim ? "#888" : "#111")};
`;

const Swatch = styled.span`
  width: 12px;
  height: 12px;
  border: 1px solid #1b7d1b;
  background: #0cf00c;
`;

const ComboWrap = styled.div`
  position: relative;
  display: flex;
  height: ${(p) => (p.$grow ? "11px" : "14px")};
  ${(p) => (p.$grow ? "flex: 1;" : `width: ${p.$width}px;`)}
`;

const ComboIcon = styled.span`
  position: absolute;
  left: 1px;
  top: 1px;
`;

const Select = styled.select`
  appearance: none;
  width: 100%;
  border: 1px solid #e2e2e2;
  border-radius: 2px;
  background: #fff;
  padding-left: ${(p) => p.$indent}px;

  &:disabled {
    background: #f7f7f7;
    opacity: 1;
  }
`;

const ComboCaret = styled.span`
  position: absolute;
  right: 3px;
  top: 0;
  bottom: 0;
  display: flex;
  align-items: center;
  pointer-events: none;
`;

const MenuBar = styled.nav`
  display: flex;
  align-items: center;
  gap: 9px;
  height: 16px;
  padding-left: 10px;
  border-bottom: 1px solid #5d6b7a;
  background: #f0f0f0;
`;

const MenuItem = styled.button`
  border: 0;
  background: none;
  line-height: 10px;
`;

const Body = styled.div`
  display: flex;
  flex: 1;
`;

const Dock = styled.aside`
  width: 23px;
  background: #f0f0f0;
`;

const DockTools = styled.div`
  display: flex;
  flex-direction: column;
  margin-left: 2px;
  padding: 0 3px 2px 0;
  border-radius: 0 0 3px 3px;
  background: linear-gradient(90deg, #fbfbfb, #eeeeee 60%, #dcdcdc);
`;

const DockGrip = styled.span`
  height: 2px;
  margin: 0 2px 1px 2px;
  background: repeating-linear-gradient(90deg, #aaa 0 1px, transparent 1px 2px);
`;

const Rule = styled.span`
  height: 1px;
  margin-bottom: 1px;
  background: #bdbdbd;
`;

const View = styled.main`
  display: flex;
  flex: 1;
  flex-direction: column;
  min-width: 0;
`;

const TitleBar = styled.header`
  display: flex;
  align-items: center;
  gap: 1px;
  height: 20px;
  padding-left: 2px;
  background: linear-gradient(#9bb5d2, #b6cfe8);
`;

const Title = styled.h1`
  flex: 1;
  margin: 0 0 0 6px;
  font: 400 8px Roboto, sans-serif;
  line-height: 12px;
`;

const WindowButton = styled.button`
  display: flex;
  align-items: center;
  justify-content: center;
  width: 22px;
  height: 13px;
  border: 1px solid ${(p) => (p.$close ? "#6b2a2a" : "#7f95ae")};
  border-radius: 2px;
  background: ${(p) =>
    p.$close ? "linear-gradient(#dc9488, #c4443a 50%, #b8403a)" : "linear-gradient(#c5d9ec, #a5c0dc 50%, #b4cde5)"};
`;

const ViewTools = styled.div`
  display: flex;
  align-items: center;
  height: 16px;
  border-bottom: 1px solid #fff;
  background: #f0f0f0;

  ${Divider} {
    height: 13px;
    margin: 0 1px;
  }
`;

const Canvas = styled.section`
  position: relative;
  flex: 1;
  min-height: 557px;
  overflow: hidden;
  background: #000;
`;

const EmptyBar = styled.div`
  position: absolute;
  left: ${(p) => p.$left}px;
  top: ${(p) => p.$top}px;
  width: 149px;
  height: 15px;
  background: #f0f0f0;
`;

const Sheet = styled.div`
  position: absolute;
  left: 370px;
  top: 234px;
  width: 276px;
  height: 300px;
  border: 2px solid #4fe09c;
`;

const PlanSvg = styled.svg`
  position: absolute;
  left: 459px;
  top: 272px;
  width: 125px;
  height: 214px;
`;

const Panel = styled.form`
  position: absolute;
  right: 0;
  top: 49px;
  width: 173px;
  padding: 2px 7px 4px 5px;
  background: #f0f0f0;
`;

const ChoiceRow = styled.div`
  display: flex;
  align-items: center;
  gap: 5px;
  height: 13px;
`;

const Label = styled.label`
  width: 63px;
  text-align: right;
  white-space: nowrap;
  color: ${(p) => (p.$dim ? "#888" : "#111")};
`;

const Fields = styled.div`
  display: flex;
  flex-direction: column;
  height: 87px;
  margin-top: 1px;
`;

const FieldRow = styled.div`
  display: flex;
  flex: 1;
  align-items: center;
  gap: 4px;
`;

const Field = styled.input`
  width: 66px;
  height: 12px;
  padding-left: 3px;
  border: 1px solid #a9b4bd;
  background: #fff;

  &:disabled {
    border-color: #a5b4c0;
    background: #e9eef2;
  }
`;

const Unit = styled.span`
  align-self: flex-start;
  margin-left: -4px;
`;

const StartButton = styled.button`
  display: block;
  width: 43px;
  height: 14px;
  margin: 4px 0 0 69px;
  border: 1px solid #b5b5b5;
  border-radius: 2px;
  background: #fdfdfd;
`;

const BottomBar = styled.div`
  display: flex;
  height: 24px;
  border-bottom: 1px solid #aaa;
  background: #f0f0f0;
`;

const ViewNumbers = styled.div`
  display: flex;
  width: 75px;
`;

const ViewNumber = styled.button`
  flex: 1;
  height: 14px;
  border: 0;
  border-right: 1px solid #333;
  border-left: 1px solid #fff;
  background: ${(p) => (p.$on ? "#f7c877" : "#f3f3f3")};
  font-size: 8px;
`;

const Coordinate = styled.div`
  display: flex;
  align-items: center;
  justify-content: space-between;
  width: 76px;

  &:not(:last-child) {
    margin-right: 3px;
  }
`;

const CoordInput = styled.input`
  width: 61px;
  height: 12px;
  padding-left: 3px;
  border: 1px solid #bbb;
  background: #fff;
  color: #777;
`;

const Axis = styled.label`
  width: 12px;
  padding-left: 2px;
  font: 700 11px "Liberation Sans", sans-serif;
`;

const Pressed = styled.button`
  display: flex;
  align-items: center;
  justify-content: center;
  width: 19px;
  height: 19px;
  border: 1px solid ${(p) => (p.$dark ? "#8d7650" : "#6f7fae")};
  background: ${(p) =>
    p.$dark ? "linear-gradient(#b79a68, #d3a65b)" : "linear-gradient(#f4a860, #fff0b0)"};
`;

const StatusBar = styled.footer`
  display: flex;
  align-items: center;
  height: 17px;
  background: #f0f0f0;
`;

const Cell = styled.div`
  display: flex;
  align-items: center;
  justify-content: ${(p) => (p.$text ? "flex-start" : "center")};
  height: 15px;
  padding-left: 1px;
  border-right: 1px solid #b5b5b5;
  ${(p) => (p.$grow ? "flex: 1;" : `width: ${p.$w}px;`)}
`;
